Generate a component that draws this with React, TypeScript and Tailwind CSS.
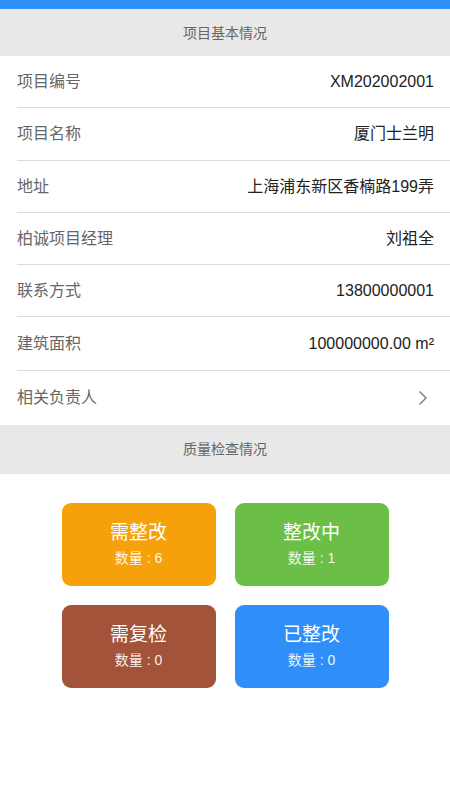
const font = "font-['Liberation_Sans','Noto_Sans_CJK_SC',sans-serif]"

const rows = [
  { label: "项目编号", value: "XM202002001", h: "h-[52px]" },
  { label: "项目名称", value: "厦门士兰明", h: "h-[53px]" },
  { label: "地址", value: "上海浦东新区香楠路199弄", h: "h-[52px]" },
  { label: "柏诚项目经理", value: "刘祖全", h: "h-[52px]" },
  { label: "联系方式", value: "13800000001", h: "h-[52px]" },
  { label: "建筑面积", value: "100000000.00 m²", h: "h-[54px]" },
]

const cards = [
  { title: "需整改", count: 6, bg: "bg-[#f7a10a]" },
  { title: "整改中", count: 1, bg: "bg-[#6cbf46]" },
  { title: "需复检", count: 0, bg: "bg-[#a2533a]" },
  { title: "已整改", count: 0, bg: "bg-[#2f8ef8]" },
]

function SectionTitle({ text, h }: { text: string; h: string }) {
  return (
    <div className={`${h} bg-[#e8e8e8] flex items-center justify-center text-[14px] text-[#666]`}>
      {text}
    </div>
  )
}

export default function App() {
  return (
    <div className={`w-[450px] h-[800px] bg-white ${font}`}>
      <div className="h-[9px] bg-[#2f8ef8]" />
      <div className="h-[1px] bg-[#dbe9f7]" />
      <SectionTitle text="项目基本情况" h="h-[46px]" />
      <div>
        {rows.map((r) => (
          <div key={r.label} className={`${r.h} ml-[17px] flex items-center justify-between pr-[16px] border-b border-[#dcdcdc] text-[16px]`}>
            <span className="text-[#666]">{r.label}</span>
            <span className="text-[#222]">{r.value}</span>
          </div>
        ))}
        <div className="h-[54px] ml-[17px] flex items-center justify-between pr-[22px] text-[16px]">
          <span className="text-[#666]">相关负责人</span>
          <svg width="10" height="16" viewBox="0 0 10 16" fill="none" stroke="#777" strokeWidth="1.4">
            <path d="M1.5 1.5 L8 8 L1.5 14.5" />
          </svg>
        </div>
      </div>
      <SectionTitle text="质量检查情况" h="h-[49px]" />
      <div className="grid grid-cols-[154px_154px] gap-x-[19px] gap-y-[19px] justify-center pt-[29px]">
        {cards.map((c) => (
          <div key={c.title} className={`h-[83px] rounded-[9px] ${c.bg} text-white flex flex-col items-center justify-center`}>
            <div className="text-[19px] leading-[24px]">{c.title}</div>
            <div className="text-[14px] leading-[20px] mt-[3px] opacity-90">数量 : {c.count}</div>
          </div>
        ))}
      </div>
    </div>
  )
}
